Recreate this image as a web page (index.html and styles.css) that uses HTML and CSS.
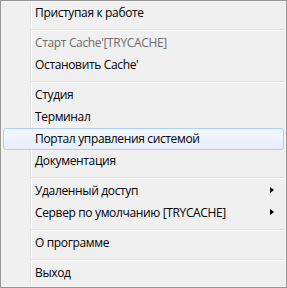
FILE: index.html
```html
<!DOCTYPE html>
<html>
<head>
<meta charset="utf-8">
<link rel="stylesheet" href="styles.css">
</head>
<body>
<div class="menu">
  <div class="item">Приступая к работе</div>
  <div class="sep"></div>
  <div class="item disabled">Старт Cache'[TRYCACHE]</div>
  <div class="item">Остановить Cache'</div>
  <div class="sep"></div>
  <div class="item">Студия</div>
  <div class="item">Терминал</div>
  <div class="item active">Портал управления системой</div>
  <div class="item">Документация</div>
  <div class="sep"></div>
  <div class="item sub">Удаленный доступ<span class="arrow"></span></div>
  <div class="item sub">Сервер по умолчанию [TRYCACHE]<span class="arrow"></span></div>
  <div class="sep"></div>
  <div class="item">О программе</div>
  <div class="sep"></div>
  <div class="item">Выход</div>
</div>
</body>
</html>
```
FILE: styles.css
```css
html, body {
  margin: 0;
  padding: 0;
  background: #f0f0f0;
}
.menu {
  box-sizing: border-box;
  width: 287px;
  height: 288px;
  border: 1px solid #979797;
  padding: 1px 0;
  background-color: #f0f0f0;
  background-image: linear-gradient(to right, transparent 29px, #e2e3e3 29px, #e2e3e3 30px, #ffffff 30px, #ffffff 31px, transparent 31px);
  box-shadow: inset 0 0 0 1px #f5f5f5;
  font-family: "Open Sans", "Noto Sans", sans-serif;
  font-size: 12px;
  letter-spacing: -0.35px;
  color: #000;
}
.item {
  position: relative;
  height: 20px;
  line-height: 20px;
  margin: 0 2px;
  padding-left: 31px;
  border: 1px solid transparent;
  border-radius: 3px;
  white-space: nowrap;
}
.item.disabled {
  color: #6d6d6d;
}
.item.active {
  border-color: #aecff7;
  background: linear-gradient(#f3f7fd, #e7effb);
}
.sep {
  height: 8px;
  margin: 0 3px 0 30px;
  background: linear-gradient(transparent 5px, #e0e0e0 5px, #e0e0e0 6px, #ffffff 6px, #ffffff 7px, transparent 7px);
}
.arrow {
  position: absolute;
  right: 9px;
  top: 6px;
  width: 0;
  height: 0;
  border-top: 3.5px solid transparent;
  border-bottom: 3.5px solid transparent;
  border-left: 4px solid #000;
}
```
